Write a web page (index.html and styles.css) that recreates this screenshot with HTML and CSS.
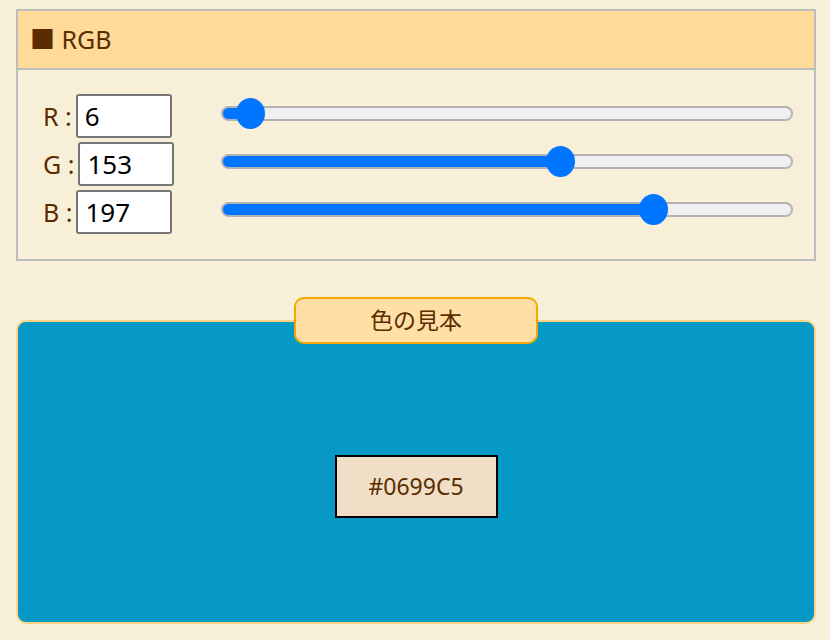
FILE: index.html
```html
<!DOCTYPE html>
<html lang="ja">
<head>
  <meta charset="UTF-8">
  <title>RGB</title>
  <link rel="stylesheet" href="styles.css">
</head>
<body>

  <div class="panel">
    <div class="panel-head">■ RGB</div>
    <div class="panel-body">
      <div class="row">
        <label class="lbl">R :</label>
        <input type="text" class="num" value="6">
        <input type="range" class="slider" min="0" max="255" value="6" style="--fill: 4.7%">
      </div>
      <div class="row">
        <label class="lbl">G :</label>
        <input type="text" class="num" value="153">
        <input type="range" class="slider" min="0" max="255" value="153" style="--fill: 59.5%">
      </div>
      <div class="row">
        <label class="lbl">B :</label>
        <input type="text" class="num" value="197">
        <input type="range" class="slider" min="0" max="255" value="197" style="--fill: 75.9%">
      </div>
    </div>
  </div>

  <div class="sample">
    <div class="sample-tab">色の見本</div>
    <div class="sample-area">
      <div class="hex">#0699C5</div>
    </div>
  </div>

</body>
</html>
```

FILE: styles.css
```css
body {
  margin: 0;
  padding: 9px 14px 0 16px;
  background-color: #f8efd8;
  font-family: "Noto Sans", "Noto Sans CJK JP", sans-serif;
  color: #5a2c00;
}

.panel {
  border: 2px solid #bdbdbd;
}

.panel-head {
  background-color: #ffdb9a;
  border-bottom: 2px solid #bdbdbd;
  height: 57px;
  line-height: 57px;
  padding-left: 12px;
  font-size: 25px;
}

.panel-body {
  padding: 22px 21px 23px 25px;
}

.row {
  display: flex;
  align-items: center;
  height: 48px;
}

.lbl {
  font-size: 25px;
  margin-right: 4px;
}

.num {
  width: 96px;
  height: 44px;
  box-sizing: border-box;
  border: 2px solid #767676;
  border-radius: 3px;
  padding: 0 7px;
  font-family: "Noto Sans", sans-serif;
  font-size: 26px;
  color: #000;
  background: #fff;
}

.slider {
  -webkit-appearance: none;
  appearance: none;
  width: 572px;
  height: 32px;
  margin: 0 0 5px auto;
  background: transparent;
}

.slider::-webkit-slider-runnable-track {
  box-sizing: border-box;
  height: 15px;
  border: 2px solid #b3b3b3;
  border-radius: 8px;
  background: linear-gradient(to right, #0075ff var(--fill), #efefef var(--fill));
}

.slider::-webkit-slider-thumb {
  -webkit-appearance: none;
  width: 29px;
  height: 31px;
  margin-top: -10px;
  border-radius: 50%;
  background: #0075ff;
  border: none;
}

.sample {
  margin-top: 59px;
  display: flex;
  flex-direction: column;
  background-color: #0699c5;
  border: 2px solid #ffd38a;
  border-radius: 10px;
  height: 300px;
}

.sample-tab {
  align-self: center;
  width: 244px;
  height: 47px;
  box-sizing: border-box;
  margin-top: -25px;
  background-color: #ffdfa6;
  border: 2px solid #f7a800;
  border-radius: 10px;
  text-align: center;
  line-height: 43px;
  font-size: 23px;
}

.sample-area {
  flex: 1;
  display: flex;
  align-items: center;
  justify-content: center;
  padding-top: 6px;
}

.hex {
  width: 163px;
  height: 63px;
  box-sizing: border-box;
  border: 2px solid #000;
  background-color: #f0dfc6;
  text-align: center;
  line-height: 59px;
  font-size: 23px;
}
```
